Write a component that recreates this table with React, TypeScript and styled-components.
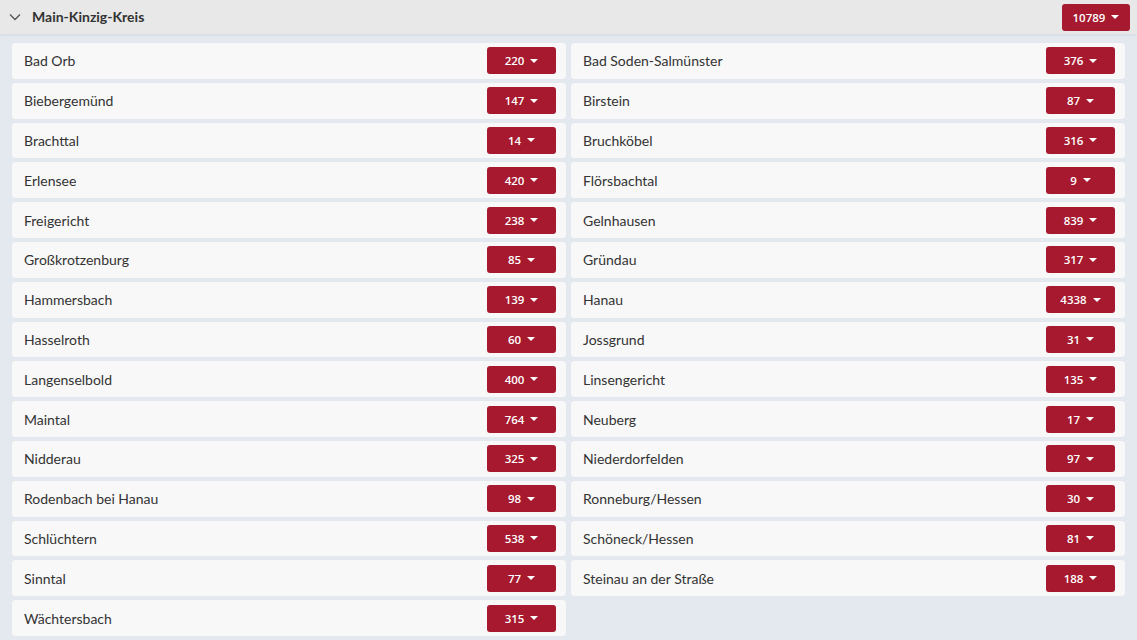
import React from 'react';
import styled, { createGlobalStyle } from 'styled-components';

const GlobalStyle = createGlobalStyle`
  html, body {
    margin: 0;
    padding: 0;
    background: #e4e9f0;
    font-family: Lato, "Noto Sans", sans-serif;
    color: #333;
  }
`;

const places: [string, number][] = [
  ['Bad Orb', 220],
  ['Bad Soden-Salmünster', 376],
  ['Biebergemünd', 147],
  ['Birstein', 87],
  ['Brachttal', 14],
  ['Bruchköbel', 316],
  ['Erlensee', 420],
  ['Flörsbachtal', 9],
  ['Freigericht', 238],
  ['Gelnhausen', 839],
  ['Großkrotzenburg', 85],
  ['Gründau', 317],
  ['Hammersbach', 139],
  ['Hanau', 4338],
  ['Hasselroth', 60],
  ['Jossgrund', 31],
  ['Langenselbold', 400],
  ['Linsengericht', 135],
  ['Maintal', 764],
  ['Neuberg', 17],
  ['Nidderau', 325],
  ['Niederdorfelden', 97],
  ['Rodenbach bei Hanau', 98],
  ['Ronneburg/Hessen', 30],
  ['Schlüchtern', 538],
  ['Schöneck/Hessen', 81],
  ['Sinntal', 77],
  ['Steinau an der Straße', 188],
  ['Wächtersbach', 315],
];

const Header = styled.div`
  display: flex;
  align-items: center;
  height: 34px;
  padding: 0 7px 0 8px;
  background: #e8e8e8;
  box-shadow: 0 1px 3px rgba(0, 0, 0, 0.08);
  position: relative;
`;

const Chevron = styled.svg`
  width: 14px;
  height: 14px;
  margin-right: 10px;
  color: #555;
`;

const Title = styled.div`
  flex: 1;
  font-size: 14px;
  font-weight: 700;
  color: #333;
  padding-bottom: 2px;
`;

const Grid = styled.div`
  display: grid;
  grid-template-columns: 1fr 1fr;
  column-gap: 5px;
  row-gap: 4px;
  padding: 9px 12px 4px 12px;
`;

const Row = styled.div`
  display: flex;
  align-items: center;
  height: 35.8px;
  padding: 0 10px 0 12px;
  background: #f8f8f8;
  border-radius: 3px;
  box-shadow: 0 0 1px rgba(0, 0, 0, 0.05);
`;

const Name = styled.div`
  flex: 1;
  font-size: 14px;
  color: #333;
`;

const Badge = styled.button<{ $wide?: boolean }>`
  display: flex;
  align-items: center;
  justify-content: center;
  gap: 6px;
  width: ${p => (p.$wide ? '68px' : '69px')};
  height: 27px;
  border: none;
  border-radius: 3px;
  background: #a6192e;
  color: #fff;
  font-family: "Open Sans", Lato, sans-serif;
  font-size: 11.5px;
  font-weight: 600;
  padding: 0;
  cursor: pointer;
`;

const Caret = () => (
  <svg width="8" height="4" viewBox="0 0 8 4">
    <path d="M0 0 L8 0 L4 4 Z" fill="#fff" />
  </svg>
);

export default function App() {
  return (
    <>
      <GlobalStyle />
      <Header>
        <Chevron viewBox="0 0 14 14">
          <path d="M2 4.5 L7 9.5 L12 4.5" fill="none" stroke="currentColor" strokeWidth="1.3" />
        </Chevron>
        <Title>Main-Kinzig-Kreis</Title>
        <Badge $wide>
          10789 <Caret />
        </Badge>
      </Header>
      <Grid>
        {places.map(([name, n]) => (
          <Row key={name}>
            <Name>{name}</Name>
            <Badge>
              {n} <Caret />
            </Badge>
          </Row>
        ))}
      </Grid>
    </>
  );
}
